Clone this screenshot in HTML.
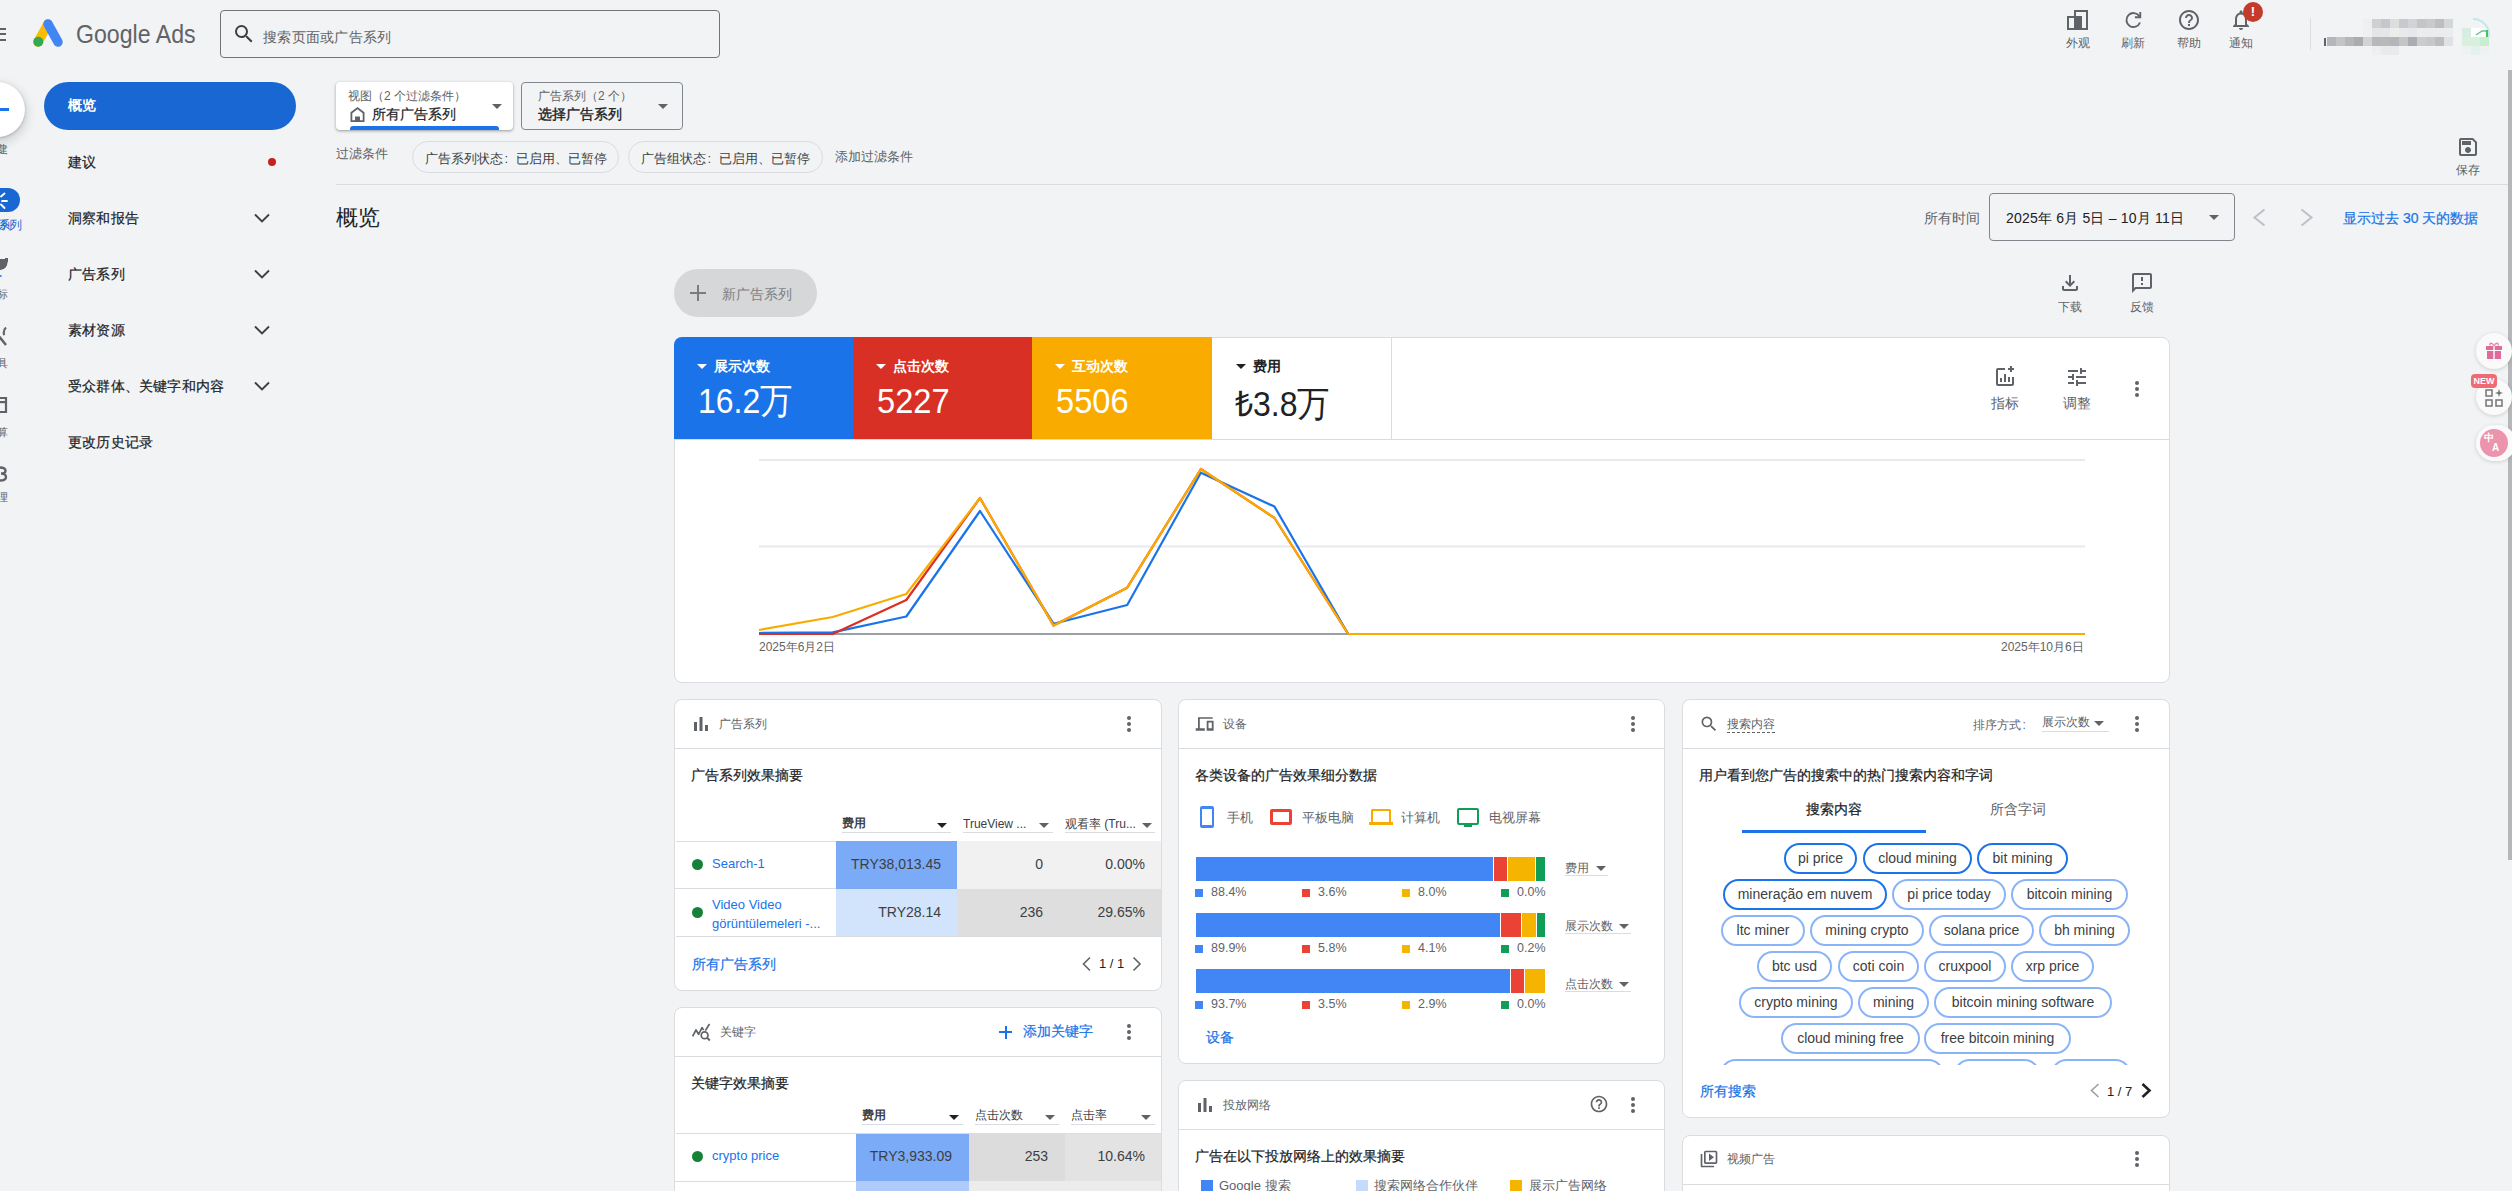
<!DOCTYPE html>
<html><head><meta charset="utf-8">
<style>
*{box-sizing:border-box;margin:0;padding:0}
html,body{width:2512px;height:1191px;overflow:hidden}
body{background:#f1f3f4;font-family:"Liberation Sans",sans-serif;color:#202124;position:relative}
.a{position:absolute;white-space:nowrap}
.g{color:#5f6368}
.card{position:absolute;background:#fff;border:1px solid #dadce0;border-radius:8px;overflow:hidden}
.hdr{position:absolute;left:0;right:0;top:0;height:50px;border-bottom:1px solid #dadce0}
svg{display:block}
.m{-webkit-text-stroke:0.2px currentColor}
.dots{position:absolute;width:4px}
.dots i{display:block;width:4px;height:4px;border-radius:2px;background:#5f6368;margin-bottom:2px}
</style></head><body>

<!-- ===== TOP BAR ===== -->
<div class="a" style="left:0;top:28px;width:6px;height:2px;background:#5f6368"></div>
<div class="a" style="left:0;top:33px;width:6px;height:2px;background:#5f6368"></div>
<div class="a" style="left:0;top:39px;width:6px;height:2px;background:#5f6368"></div>

<svg class="a" style="left:30px;top:16px" width="36" height="34" viewBox="0 0 36 34">
  <line x1="18" y1="8" x2="8" y2="26" stroke="#fbbc04" stroke-width="9.5" stroke-linecap="round"/>
  <line x1="18" y1="8" x2="28" y2="26" stroke="#4285f4" stroke-width="9.5" stroke-linecap="round"/>
  <circle cx="8.3" cy="25.7" r="5" fill="#34a853"/>
</svg>
<div class="a" style="left:76px;top:20px;font-size:25px;color:#5f6368;transform:scaleX(0.925);transform-origin:0 0">Google Ads</div>

<div class="a" style="left:220px;top:10px;width:500px;height:48px;border:1px solid #70757a;border-radius:4px"></div>
<svg class="a" style="left:232px;top:22px" width="24" height="24" viewBox="0 0 24 24"><path fill="#3c4043" d="M15.5 14h-.79l-.28-.27A6.47 6.47 0 0 0 16 9.5 6.5 6.5 0 1 0 9.5 16c1.61 0 3.09-.59 4.23-1.57l.27.28v.79l5 4.99L20.49 19l-4.99-5zm-6 0C7.01 14 5 11.99 5 9.5S7.01 5 9.5 5 14 7.01 14 9.5 11.99 14 9.5 14z"/></svg>
<div class="a g" style="left:263px;top:29px;font-size:14px;letter-spacing:0.25px">搜索页面或广告系列</div>

<!-- top right icons -->
<svg class="a" style="left:2066px;top:9px" width="24" height="22" viewBox="2066 9 24 22"><rect x="2075" y="11" width="12" height="18" fill="none" stroke="#5f6368" stroke-width="2"/><rect x="2068" y="17" width="7" height="12" fill="none" stroke="#5f6368" stroke-width="2"/><rect x="2074" y="16" width="8" height="14" fill="#5f6368"/></svg>
<div class="a g" style="left:2066px;top:35px;font-size:12px">外观</div>
<svg class="a" style="left:2121px;top:8px" width="24" height="24" viewBox="0 0 24 24"><path fill="none" stroke="#5f6368" stroke-width="1.9" d="M18.3 8.2A7 7 0 1 0 19 14.5"/><path fill="#5f6368" d="M20.2 3.9v6.3h-6.3v-1.9h4.4V3.9z"/></svg>
<div class="a g" style="left:2121px;top:35px;font-size:12px">刷新</div>
<svg class="a" style="left:2177px;top:8px" width="24" height="24" viewBox="0 0 24 24"><path fill="#5f6368" d="M11 18h2v-2h-2v2zm1-16C6.48 2 2 6.48 2 12s4.48 10 10 10 10-4.48 10-10S17.52 2 12 2zm0 18c-4.41 0-8-3.59-8-8s3.59-8 8-8 8 3.59 8 8-3.59 8-8 8zm0-14c-2.21 0-4 1.79-4 4h2c0-1.1.9-2 2-2s2 .9 2 2c0 2-3 1.75-3 5h2c0-2.25 3-2.5 3-5 0-2.21-1.79-4-4-4z"/></svg>
<div class="a g" style="left:2177px;top:35px;font-size:12px">帮助</div>
<svg class="a" style="left:2229px;top:8px" width="24" height="24" viewBox="0 0 24 24"><path fill="#5f6368" d="M12 22c1.1 0 2-.9 2-2h-4c0 1.1.9 2 2 2zm6-6v-5c0-3.07-1.63-5.64-4.5-6.32V4c0-.83-.67-1.5-1.5-1.5s-1.5.67-1.5 1.5v.68C7.64 5.36 6 7.92 6 11v5l-2 2v1h16v-1l-2-2zm-2 1H8v-6c0-2.48 1.51-4.5 4-4.5s4 2.02 4 4.5v6z"/></svg>
<div class="a" style="left:2243px;top:2px;width:20px;height:20px;border-radius:10px;background:#c43b2c;color:#fff;font-size:13px;font-weight:bold;text-align:center;line-height:20px">!</div>
<div class="a g" style="left:2229px;top:35px;font-size:12px">通知</div>
<div class="a" style="left:2310px;top:18px;width:1px;height:32px;background:#dadce0"></div>
<!-- blurred account -->
<svg class="a" style="left:2300px;top:0" width="212" height="64" viewBox="2300 0 212 64"><rect x="2363" y="19" width="9" height="9" fill="#eef0f0"/><rect x="2363" y="28" width="9" height="9" fill="#eef0f1"/><rect x="2363" y="37" width="9" height="9" fill="#d2d4d4"/><rect x="2372" y="19" width="9" height="9" fill="#cfd0d2"/><rect x="2372" y="28" width="9" height="9" fill="#e4e5e8"/><rect x="2372" y="37" width="9" height="9" fill="#b7b8bb"/><rect x="2381" y="19" width="9" height="9" fill="#c6c7ca"/><rect x="2381" y="28" width="9" height="9" fill="#e5e6e8"/><rect x="2381" y="37" width="9" height="9" fill="#b9b9ba"/><rect x="2390" y="19" width="9" height="9" fill="#dcdedd"/><rect x="2390" y="28" width="9" height="9" fill="#eceeec"/><rect x="2390" y="37" width="9" height="9" fill="#b5b6bb"/><rect x="2399" y="19" width="9" height="9" fill="#c8c9cc"/><rect x="2399" y="28" width="9" height="9" fill="#e7eaec"/><rect x="2399" y="37" width="9" height="9" fill="#c4c5c5"/><rect x="2408" y="19" width="9" height="9" fill="#d2d3d6"/><rect x="2408" y="28" width="9" height="9" fill="#e6e7ea"/><rect x="2408" y="37" width="9" height="9" fill="#acadb2"/><rect x="2417" y="19" width="9" height="9" fill="#c4c5c8"/><rect x="2417" y="28" width="9" height="9" fill="#ebecee"/><rect x="2417" y="37" width="9" height="9" fill="#cbcccc"/><rect x="2426" y="19" width="9" height="9" fill="#c9cbca"/><rect x="2426" y="28" width="9" height="9" fill="#ebecee"/><rect x="2426" y="37" width="9" height="9" fill="#c7c8c8"/><rect x="2435" y="19" width="9" height="9" fill="#bdbec1"/><rect x="2435" y="28" width="9" height="9" fill="#ebecee"/><rect x="2435" y="37" width="9" height="9" fill="#bcbdc1"/><rect x="2444" y="19" width="9" height="9" fill="#d4d6d9"/><rect x="2444" y="28" width="9" height="9" fill="#ebecee"/><rect x="2444" y="37" width="9" height="9" fill="#e0e1e4"/><rect x="2327" y="37" width="9" height="9" fill="#b5b6b9"/><rect x="2336" y="37" width="9" height="9" fill="#c4c4c6"/><rect x="2345" y="37" width="9" height="9" fill="#b4b8bb"/><rect x="2354" y="37" width="9" height="9" fill="#abacb0"/><rect x="2372" y="46" width="9" height="9" fill="#eef0f0"/><rect x="2381" y="46" width="9" height="9" fill="#e8eaeb"/><rect x="2390" y="46" width="9" height="9" fill="#e9eaeb"/><rect x="2462" y="28" width="9" height="9" fill="#d5ede2"/><rect x="2471" y="28" width="18" height="9" fill="#ffffff"/><rect x="2462" y="37" width="18" height="9" fill="#d9f0df"/><rect x="2480" y="37" width="9" height="9" fill="#c9edd0"/><rect x="2462" y="46" width="9" height="9" fill="#eef3f2"/><rect x="2471" y="46" width="9" height="9" fill="#e2f3ee"/><rect x="2480" y="46" width="9" height="9" fill="#eef3f2"/><path d="M2473 19 a16 16 0 0 1 16 18" fill="none" stroke="#bfe8ee" stroke-width="2"/><path d="M2476 35 l6-4 l6 0" fill="none" stroke="#6cc486" stroke-width="1.5"/><rect x="2486" y="30" width="2" height="7" fill="#46c35a"/><rect x="2324" y="38" width="2" height="8" fill="#5f6368"/></svg>
<!-- ===== LEFT RAIL ===== -->
<div class="a" style="left:-30px;top:82px;width:55px;height:55px;border-radius:50%;background:#fff;box-shadow:0 1px 3px rgba(60,64,67,.3),0 4px 8px 3px rgba(60,64,67,.15)"></div>
<div class="a" style="left:0;top:108px;width:9px;height:3px;background:#1a73e8"></div>
<div class="a g" style="left:-8px;top:141px;font-size:11px">建</div>
<div class="a" style="left:-12px;top:188px;width:32px;height:24px;border-radius:12px;background:#1967d2"></div>
<div class="a" style="left:-10px;top:218px;font-size:11px;color:#1967d2">系列</div>

<!-- ===== NAV ===== -->
<div class="a" style="left:44px;top:82px;width:252px;height:48px;border-radius:24px;background:#1967d2"></div>
<div class="a" style="left:68px;top:97px;font-size:14px;font-weight:bold;color:#fff">概览</div>
<div class="a m" style="left:68px;top:154px;font-size:14px;letter-spacing:0.2px;-webkit-text-stroke:0.2px #202124">建议</div>
<div class="a" style="left:268px;top:158px;width:8px;height:8px;border-radius:4px;background:#c5221f"></div>
<div class="a m" style="left:68px;top:210px;font-size:14px;letter-spacing:0.2px;-webkit-text-stroke:0.2px #202124">洞察和报告</div>
<div class="a m" style="left:68px;top:266px;font-size:14px;letter-spacing:0.2px;-webkit-text-stroke:0.2px #202124">广告系列</div>
<div class="a m" style="left:68px;top:322px;font-size:14px;letter-spacing:0.2px;-webkit-text-stroke:0.2px #202124">素材资源</div>
<div class="a m" style="left:68px;top:378px;font-size:14px;letter-spacing:0.2px;-webkit-text-stroke:0.2px #202124">受众群体、关键字和内容</div>
<div class="a m" style="left:68px;top:434px;font-size:14px;letter-spacing:0.2px;-webkit-text-stroke:0.2px #202124">更改历史记录</div>


<!-- ===== FILTER BAR ===== -->
<div class="a" style="left:336px;top:82px;width:177px;height:48px;background:#fff;border-radius:4px;box-shadow:0 1px 2px rgba(60,64,67,.3),0 1px 3px 1px rgba(60,64,67,.15);overflow:hidden">
  <div class="a g" style="left:12px;top:6px;font-size:12px">视图（2 个过滤条件）</div>
  <svg class="a" style="left:14px;top:24px" width="16" height="17" viewBox="0 0 16 17"><path fill="#5f6368" d="M7.5 1 .5 6.3V16h14V6.3L7.5 1zm5.2 13.2H2.3V7.2l5.2-3.9 5.2 3.9z"/><path fill="#5f6368" d="M5 10.5h5v4.5H5z"/></svg>
  <div class="a m" style="left:36px;top:24px;font-size:14px;color:#202124">所有广告系列</div>
  <div class="a" style="left:156px;top:22px;width:0;height:0;border-left:5px solid transparent;border-right:5px solid transparent;border-top:5px solid #5f6368"></div>
  <div class="a" style="left:14px;top:44px;width:149px;height:6px;border-radius:3px;background:#1a73e8"></div>
</div>
<div class="a" style="left:521px;top:82px;width:162px;height:48px;border:1px solid #80868b;border-radius:4px">
  <div class="a g" style="left:16px;top:5px;font-size:12px">广告系列（2 个）</div>
  <div class="a m" style="left:16px;top:23px;font-size:14px;color:#202124;-webkit-text-stroke:0.35px #202124">选择广告系列</div>
  <div class="a" style="left:136px;top:21px;width:0;height:0;border-left:5px solid transparent;border-right:5px solid transparent;border-top:5px solid #5f6368"></div>
</div>

<div class="a g" style="left:336px;top:145px;font-size:13px">过滤条件</div>
<div class="a" style="left:412px;top:141px;width:207px;height:32px;border:1px solid #dadce0;border-radius:16px"></div>
<div class="a" style="left:425px;top:150px;font-size:13px;color:#3c4043">广告系列状态<span style="display:inline-block;width:13px;padding-left:1.5px">:</span>已启用、已暂停</div>
<div class="a" style="left:628px;top:141px;width:195px;height:32px;border:1px solid #dadce0;border-radius:16px"></div>
<div class="a" style="left:641px;top:150px;font-size:13px;color:#3c4043">广告组状态<span style="display:inline-block;width:13px;padding-left:1.5px">:</span>已启用、已暂停</div>
<div class="a g" style="left:835px;top:148px;font-size:13px">添加过滤条件</div>

<svg class="a" style="left:2456px;top:135px" width="24" height="24" viewBox="0 0 24 24"><path fill="#5f6368" d="M17 3H5a2 2 0 0 0-2 2v14a2 2 0 0 0 2 2h14c1.1 0 2-.9 2-2V7l-4-4zm2 16H5V5h11.17L19 7.83V19zm-7-7c-1.66 0-3 1.34-3 3s1.34 3 3 3 3-1.34 3-3-1.34-3-3-3zM6 6h9v4H6z"/></svg>
<div class="a g" style="left:2456px;top:162px;font-size:12px">保存</div>
<div class="a" style="left:336px;top:184px;width:2172px;height:1px;background:#dadce0"></div>

<!-- ===== TITLE / DATE ===== -->
<div class="a" style="left:336px;top:203px;font-size:22px;color:#202124">概览</div>
<div class="a g" style="left:1924px;top:210px;font-size:14px">所有时间</div>
<div class="a" style="left:1989px;top:193px;width:246px;height:48px;border:1px solid #80868b;border-radius:4px"></div>
<div class="a" style="left:2006px;top:210px;font-size:14px;color:#202124;letter-spacing:0.2px">2025年 6月 5日 – 10月 11日</div>
<div class="a" style="left:2209px;top:215px;width:0;height:0;border-left:5px solid transparent;border-right:5px solid transparent;border-top:5px solid #5f6368"></div>
<svg class="a" style="left:2250px;top:206px" width="70" height="24" viewBox="2250 206 70 24"><path d="M2264.5 209.5 2254.5 217.5l10 8" fill="none" stroke="#bdc1c6" stroke-width="2"/><path d="M2301.5 209.5l10 8-10 8" fill="none" stroke="#bdc1c6" stroke-width="2"/></svg>

<div class="a m" style="left:2343px;top:210px;font-size:14px;color:#1a73e8">显示过去 30 天的数据</div>

<!-- ===== NEW CAMPAIGN / DOWNLOAD ===== -->
<div class="a" style="left:674px;top:269px;width:143px;height:48px;border-radius:24px;background:#d6d7d9"></div>
<div class="a" style="left:690px;top:292px;width:16px;height:2px;background:#7a7c80"></div>
<div class="a" style="left:697px;top:285px;width:2px;height:16px;background:#7a7c80"></div>
<div class="a" style="left:722px;top:286px;font-size:14px;color:#7d7f83">新广告系列</div>
<svg class="a" style="left:2058px;top:271px" width="24" height="24" viewBox="0 0 24 24"><path fill="#5f6368" d="M18 15v3H6v-3H4v3c0 1.1.9 2 2 2h12c1.1 0 2-.9 2-2v-3h-2zm-1-4-1.41-1.41L13 12.17V4h-2v8.17L8.41 9.59 7 11l5 5 5-5z"/></svg>
<div class="a g" style="left:2058px;top:299px;font-size:12px">下载</div>
<svg class="a" style="left:2130px;top:271px" width="24" height="24" viewBox="0 0 24 24"><path fill="#5f6368" d="M20 2H4c-1.1 0-1.99.9-1.99 2L2 22l4-4h14c1.1 0 2-.9 2-2V4c0-1.1-.9-2-2-2zm0 14H5.17l-.59.59-.58.58V4h16v12zm-9-4h2v2h-2zm0-6h2v4h-2z"/></svg>
<div class="a g" style="left:2130px;top:299px;font-size:12px">反馈</div>


<!-- ===== CHART CARD ===== -->
<div class="card" style="left:674px;top:337px;width:1496px;height:346px"></div>
<div class="a" style="left:674px;top:337px;width:179px;height:102px;background:#1a73e8;border-top-left-radius:8px"></div>
<div class="a" style="left:853px;top:337px;width:179px;height:102px;background:#d93025"></div>
<div class="a" style="left:1032px;top:337px;width:180px;height:102px;background:#f9ab00"></div>
<div class="a" style="left:1391px;top:338px;width:1px;height:101px;background:#dadce0"></div>
<div class="a" style="left:674px;top:439px;width:1496px;height:1px;background:#dadce0"></div>

<div class="a" style="left:697px;top:364px;border-left:5px solid transparent;border-right:5px solid transparent;border-top:5px solid #fff"></div>
<div class="a" style="left:714px;top:358px;font-size:14px;font-weight:bold;color:#fff">展示次数</div>
<div class="a" style="left:698px;top:378px;font-size:35.5px;transform:scaleX(0.9);transform-origin:0 0;color:#fff">16.2万</div>
<div class="a" style="left:876px;top:364px;border-left:5px solid transparent;border-right:5px solid transparent;border-top:5px solid #fff"></div>
<div class="a" style="left:893px;top:358px;font-size:14px;font-weight:bold;color:#fff">点击次数</div>
<div class="a" style="left:877px;top:381px;font-size:35.5px;transform:scaleX(0.92);transform-origin:0 0;color:#fff">5227</div>
<div class="a" style="left:1055px;top:364px;border-left:5px solid transparent;border-right:5px solid transparent;border-top:5px solid #fff"></div>
<div class="a" style="left:1072px;top:358px;font-size:14px;font-weight:bold;color:#fff">互动次数</div>
<div class="a" style="left:1056px;top:381px;font-size:35.5px;transform:scaleX(0.92);transform-origin:0 0;color:#fff">5506</div>
<div class="a" style="left:1236px;top:364px;border-left:5px solid transparent;border-right:5px solid transparent;border-top:5px solid #202124"></div>
<div class="a" style="left:1253px;top:358px;font-size:14px;font-weight:bold;color:#202124">费用</div>
<div class="a" style="left:1235px;top:378px;font-size:35.5px;transform:scaleX(0.9);transform-origin:0 0;color:#202124">₺3.8万</div>

<svg class="a" style="left:1993px;top:365px" width="24" height="24" viewBox="0 0 24 24"><path fill="#5f6368" d="M3 5v14a2 2 0 0 0 2 2h14a2 2 0 0 0 2-2v-7h-2v7H5V5h7V3H5a2 2 0 0 0-2 2zm4 8h2v4H7zm4-4h2v8h-2zm4 3h2v5h-2zM19 3V1h-2v2h-2v2h2v2h2V5h2V3z"/></svg>
<div class="a g" style="left:1991px;top:395px;font-size:14px">指标</div>
<svg class="a" style="left:2065px;top:365px" width="24" height="24" viewBox="0 0 24 24"><path fill="#5f6368" d="M3 17v2h6v-2H3zM3 5v2h10V5H3zm10 16v-2h8v-2h-8v-2h-2v6h2zM7 9v2H3v2h4v2h2V9H7zm14 4v-2H11v2h10zm-6-4h2V7h4V5h-4V3h-2v6z"/></svg>
<div class="a g" style="left:2063px;top:395px;font-size:14px">调整</div>
<div class="dots" style="left:2135px;top:381px"><i></i><i></i><i></i></div>

<svg class="a" style="left:675px;top:338px" width="1494" height="345" viewBox="675 338 1494 345">
  <line x1="759" y1="460" x2="2085" y2="460" stroke="#e8eaed" stroke-width="2"/>
  <line x1="759" y1="546.5" x2="2085" y2="546.5" stroke="#e8eaed" stroke-width="2"/>
  <line x1="759" y1="634" x2="2085" y2="634" stroke="#9aa0a6" stroke-width="2"/>
  <polyline fill="none" stroke="#1a73e8" stroke-width="2.2" stroke-linejoin="round" points="759.0,633.0 832.7,632.3 906.3,616.5 980.0,511.0 1053.6,623.7 1127.2,605.0 1200.9,472.7 1274.5,506.6 1348.2,634.0 2085,634"/>
  <polyline fill="none" stroke="#d93025" stroke-width="2.2" stroke-linejoin="round" points="759.0,634.0 832.7,634.0 906.3,600.0 980.0,498.0 1053.6,625.6 1127.2,587.7 1200.9,469.0 1274.5,518.0 1348.2,634.0 2085,634"/>
  <polyline fill="none" stroke="#f9ab00" stroke-width="2.2" stroke-linejoin="round" points="759.0,630.0 832.7,617.0 906.3,594.0 980.0,498.0 1053.6,625.6 1127.2,587.7 1200.9,469.0 1274.5,518.0 1348.2,634.0 2085,634"/>
</svg>
<div class="a g" style="left:759px;top:639px;font-size:12px">2025年6月2日</div>
<div class="a g" style="left:2001px;top:639px;font-size:12px">2025年10月6日</div>

<!-- ===== CARD CAMPAIGNS ===== -->
<div class="card" style="left:674px;top:699px;width:488px;height:292px"></div>
<div class="a" style="left:674px;top:748px;width:488px;height:1px;background:#dadce0"></div>
<svg class="a" style="left:692px;top:715px" width="18" height="18" viewBox="0 0 18 18"><path fill="#5f6368" d="M2 7h3v9H2zM7.5 2h3v14h-3zM13 10h3v6h-3z"/></svg>
<div class="a g" style="left:719px;top:716px;font-size:12px">广告系列</div>
<div class="dots" style="left:1127px;top:716px"><i></i><i></i><i></i></div>
<div class="a m" style="left:691px;top:767px;font-size:14px;color:#202124">广告系列效果摘要</div>
<div class="a" style="left:842px;top:815px;font-size:12px;font-weight:bold;color:#3c4043">费用</div><div class="a" style="left:937px;top:823px;border-left:5px solid transparent;border-right:5px solid transparent;border-top:5px solid #202124"></div>
<div class="a" style="left:842px;top:832px;width:109px;height:1px;background:#dadce0"></div>
<div class="a" style="left:963px;top:817px;font-size:12px;color:#3c4043">TrueView ...</div><div class="a" style="left:1039px;top:823px;border-left:5px solid transparent;border-right:5px solid transparent;border-top:5px solid #5f6368"></div>
<div class="a" style="left:963px;top:832px;width:90px;height:1px;background:#dadce0"></div>
<div class="a" style="left:1065px;top:816px;font-size:12px;color:#3c4043">观看率 (Tru...</div><div class="a" style="left:1142px;top:823px;border-left:5px solid transparent;border-right:5px solid transparent;border-top:5px solid #5f6368"></div>
<div class="a" style="left:1065px;top:832px;width:90px;height:1px;background:#dadce0"></div>
<div class="a" style="left:676px;top:841px;width:485px;height:1px;background:#dadce0"></div>
<div class="a" style="left:836px;top:841px;width:121px;height:48px;background:#7baaf7"></div>
<div class="a" style="left:957px;top:841px;width:204px;height:48px;background:#f1f1f1"></div>
<div class="a" style="left:675px;top:888px;width:161px;height:1px;background:#dadce0"></div>
<div class="a" style="left:836px;top:889px;width:121px;height:48px;background:#d2e3fc"></div>
<div class="a" style="left:957px;top:889px;width:204px;height:48px;background:#dedede"></div>
<div class="a" style="left:676px;top:936px;width:485px;height:1px;background:#dadce0"></div>
<div class="a" style="left:692px;top:859px;width:11px;height:11px;border-radius:6px;background:#188038"></div>
<div class="a" style="left:712px;top:856px;font-size:13px;color:#1a73e8">Search-1</div>
<div class="a" style="left:692px;top:907px;width:11px;height:11px;border-radius:6px;background:#188038"></div>
<div class="a" style="left:712px;top:895px;font-size:13px;color:#1a73e8;line-height:19px">Video Video<br>görüntülemeleri -...</div>
<div class="a" style="right:1571px;top:856px;font-size:14px;color:#3c4043">TRY38,013.45</div>
<div class="a" style="right:1469px;top:856px;font-size:14px;color:#3c4043">0</div>
<div class="a" style="right:1367px;top:856px;font-size:14px;color:#3c4043">0.00%</div>
<div class="a" style="right:1571px;top:904px;font-size:14px;color:#3c4043">TRY28.14</div>
<div class="a" style="right:1469px;top:904px;font-size:14px;color:#3c4043">236</div>
<div class="a" style="right:1367px;top:904px;font-size:14px;color:#3c4043">29.65%</div>
<div class="a" style="left:692px;top:956px;font-size:14px;color:#1a73e8;-webkit-text-stroke:0.2px #1a73e8">所有广告系列</div>
<svg class="a" style="left:1080px;top:956px" width="14" height="16" viewBox="0 0 14 16"><path d="M10 1.5 3.5 8l6.5 6.5" fill="none" stroke="#5f6368" stroke-width="1.6"/></svg>
<div class="a" style="left:1099px;top:956px;font-size:13px;color:#202124">1 / 1</div>
<svg class="a" style="left:1130px;top:956px" width="14" height="16" viewBox="0 0 14 16"><path d="M3.5 1.5 10 8l-6.5 6.5" fill="none" stroke="#5f6368" stroke-width="1.6"/></svg>
<!-- ===== CARD KEYWORDS ===== -->
<div class="card" style="left:674px;top:1007px;width:488px;height:300px"></div>
<div class="a" style="left:674px;top:1056px;width:488px;height:1px;background:#dadce0"></div>
<svg class="a" style="left:688px;top:1018px" width="26" height="28" viewBox="688 1018 26 28"><path fill="none" stroke="#5f6368" stroke-width="1.7" stroke-linejoin="round" d="M692.6 1036.3 696 1030l2.6 4.3 3.4-6.7 1.6 2.4M705.3 1030.6l4.2-6.6"/><circle cx="704.6" cy="1035.2" r="3.4" fill="none" stroke="#5f6368" stroke-width="1.7"/><path stroke="#5f6368" stroke-width="1.9" d="m707 1037.6 2.8 2.9"/></svg>
<div class="a g" style="left:720px;top:1024px;font-size:12px">关键字</div>
<div class="a" style="left:999px;top:1031px;width:13px;height:2px;background:#1a73e8"></div><div class="a" style="left:1004.5px;top:1025.5px;width:2px;height:13px;background:#1a73e8"></div>
<div class="a" style="left:1023px;top:1023px;font-size:14px;color:#1a73e8;-webkit-text-stroke:0.2px #1a73e8">添加关键字</div>
<div class="dots" style="left:1127px;top:1024px"><i></i><i></i><i></i></div>
<div class="a m" style="left:691px;top:1075px;font-size:14px;color:#202124">关键字效果摘要</div>
<div class="a" style="left:862px;top:1107px;font-size:12px;font-weight:bold;color:#3c4043">费用</div><div class="a" style="left:949px;top:1115px;border-left:5px solid transparent;border-right:5px solid transparent;border-top:5px solid #202124"></div>
<div class="a" style="left:862px;top:1124px;width:101px;height:1px;background:#dadce0"></div>
<div class="a" style="left:975px;top:1107px;font-size:12px;color:#3c4043">点击次数</div><div class="a" style="left:1045px;top:1115px;border-left:5px solid transparent;border-right:5px solid transparent;border-top:5px solid #5f6368"></div>
<div class="a" style="left:975px;top:1124px;width:84px;height:1px;background:#dadce0"></div>
<div class="a" style="left:1071px;top:1107px;font-size:12px;color:#3c4043">点击率</div><div class="a" style="left:1141px;top:1115px;border-left:5px solid transparent;border-right:5px solid transparent;border-top:5px solid #5f6368"></div>
<div class="a" style="left:1071px;top:1124px;width:84px;height:1px;background:#dadce0"></div>
<div class="a" style="left:676px;top:1133px;width:485px;height:1px;background:#dadce0"></div>
<div class="a" style="left:856px;top:1134px;width:113px;height:47px;background:#7baaf7"></div>
<div class="a" style="left:969px;top:1134px;width:96px;height:47px;background:#dcdcdc"></div>
<div class="a" style="left:1065px;top:1134px;width:96px;height:47px;background:#e3e3e3"></div>
<div class="a" style="left:675px;top:1181px;width:181px;height:1px;background:#dadce0"></div>
<div class="a" style="left:856px;top:1181px;width:113px;height:20px;background:#aecbfa"></div>
<div class="a" style="left:969px;top:1181px;width:192px;height:20px;background:#ececec"></div>
<div class="a" style="left:692px;top:1151px;width:11px;height:11px;border-radius:6px;background:#188038"></div>
<div class="a" style="left:712px;top:1148px;font-size:13px;color:#1a73e8">crypto price</div>
<div class="a" style="right:1560px;top:1148px;font-size:14px;color:#3c4043">TRY3,933.09</div>
<div class="a" style="right:1464px;top:1148px;font-size:14px;color:#3c4043">253</div>
<div class="a" style="right:1367px;top:1148px;font-size:14px;color:#3c4043">10.64%</div>
<!-- ===== CARD DEVICES ===== -->
<div class="card" style="left:1178px;top:699px;width:487px;height:365px"></div>
<div class="a" style="left:1178px;top:748px;width:487px;height:1px;background:#dadce0"></div>
<svg class="a" style="left:1190px;top:710px" width="30" height="28" viewBox="1190 710 30 28"><path fill="#5f6368" d="M1198 717.2h14.7v1.6H1199.8v9.4h5v2.5h-9.1v-2.5h2.3z"/><path fill="#5f6368" d="M1206.7 720.7h6.9v10h-6.9zm1.8 1.8v5.7h3.3v-5.7z"/></svg>
<div class="a g" style="left:1223px;top:716px;font-size:12px">设备</div>
<div class="dots" style="left:1631px;top:716px"><i></i><i></i><i></i></div>
<div class="a m" style="left:1195px;top:767px;font-size:14px;color:#202124">各类设备的广告效果细分数据</div>
<div class="a" style="left:1200px;top:806px;width:14px;height:22px;border:2.5px solid #4285f4;border-top-width:3.5px;border-bottom-width:3.5px;border-radius:2px"></div>
<div class="a g" style="left:1227px;top:809px;font-size:13px">手机</div>
<div class="a" style="left:1270px;top:809px;width:22px;height:16px;border:3px solid #ea4335;border-radius:2px"></div>
<div class="a g" style="left:1302px;top:809px;font-size:13px">平板电脑</div>
<div class="a" style="left:1371px;top:809px;width:20px;height:14px;border:2.2px solid #f9ab00;border-bottom:0;border-radius:2px 2px 0 0"></div><div class="a" style="left:1369px;top:822px;width:24px;height:3px;background:#f9ab00"></div>
<div class="a g" style="left:1401px;top:809px;font-size:13px">计算机</div>
<div class="a" style="left:1457px;top:808px;width:22px;height:17px;border:2.2px solid #0f9d58;border-radius:2px"></div><div class="a" style="left:1464px;top:825px;width:8px;height:2px;background:#0f9d58"></div>
<div class="a g" style="left:1489px;top:809px;font-size:13px">电视屏幕</div>
<div class="a" style="left:1196px;top:857px;width:297px;height:24px;background:#4285f4"></div>
<div class="a" style="left:1494px;top:857px;width:13px;height:24px;background:#ea4335"></div>
<div class="a" style="left:1508px;top:857px;width:27px;height:24px;background:#f4b400"></div>
<div class="a" style="left:1536px;top:857px;width:9px;height:24px;background:#0f9d58"></div>
<div class="a" style="left:1195px;top:889px;width:8px;height:8px;background:#4285f4"></div>
<div class="a g" style="left:1211px;top:885px;font-size:12.5px">88.4%</div>
<div class="a" style="left:1302px;top:889px;width:8px;height:8px;background:#ea4335"></div>
<div class="a g" style="left:1318px;top:885px;font-size:12.5px">3.6%</div>
<div class="a" style="left:1402px;top:889px;width:8px;height:8px;background:#f4b400"></div>
<div class="a g" style="left:1418px;top:885px;font-size:12.5px">8.0%</div>
<div class="a" style="left:1501px;top:889px;width:8px;height:8px;background:#0f9d58"></div>
<div class="a g" style="left:1517px;top:885px;font-size:12.5px">0.0%</div>
<div class="a g" style="left:1565px;top:860px;font-size:12px">费用</div>
<div class="a" style="left:1596px;top:866px;border-left:5px solid transparent;border-right:5px solid transparent;border-top:5px solid #5f6368"></div>
<div class="a" style="left:1565px;top:875px;width:43px;height:1px;background:#dadce0"></div>
<div class="a" style="left:1196px;top:913px;width:304px;height:24px;background:#4285f4"></div>
<div class="a" style="left:1501px;top:913px;width:20px;height:24px;background:#ea4335"></div>
<div class="a" style="left:1522px;top:913px;width:14px;height:24px;background:#f4b400"></div>
<div class="a" style="left:1537px;top:913px;width:8px;height:24px;background:#0f9d58"></div>
<div class="a" style="left:1195px;top:945px;width:8px;height:8px;background:#4285f4"></div>
<div class="a g" style="left:1211px;top:941px;font-size:12.5px">89.9%</div>
<div class="a" style="left:1302px;top:945px;width:8px;height:8px;background:#ea4335"></div>
<div class="a g" style="left:1318px;top:941px;font-size:12.5px">5.8%</div>
<div class="a" style="left:1402px;top:945px;width:8px;height:8px;background:#f4b400"></div>
<div class="a g" style="left:1418px;top:941px;font-size:12.5px">4.1%</div>
<div class="a" style="left:1501px;top:945px;width:8px;height:8px;background:#0f9d58"></div>
<div class="a g" style="left:1517px;top:941px;font-size:12.5px">0.2%</div>
<div class="a g" style="left:1565px;top:918px;font-size:12px">展示次数</div>
<div class="a" style="left:1619px;top:924px;border-left:5px solid transparent;border-right:5px solid transparent;border-top:5px solid #5f6368"></div>
<div class="a" style="left:1565px;top:933px;width:66px;height:1px;background:#dadce0"></div>
<div class="a" style="left:1196px;top:969px;width:314px;height:24px;background:#4285f4"></div>
<div class="a" style="left:1511px;top:969px;width:13px;height:24px;background:#ea4335"></div>
<div class="a" style="left:1525px;top:969px;width:20px;height:24px;background:#f4b400"></div>
<div class="a" style="left:1195px;top:1001px;width:8px;height:8px;background:#4285f4"></div>
<div class="a g" style="left:1211px;top:997px;font-size:12.5px">93.7%</div>
<div class="a" style="left:1302px;top:1001px;width:8px;height:8px;background:#ea4335"></div>
<div class="a g" style="left:1318px;top:997px;font-size:12.5px">3.5%</div>
<div class="a" style="left:1402px;top:1001px;width:8px;height:8px;background:#f4b400"></div>
<div class="a g" style="left:1418px;top:997px;font-size:12.5px">2.9%</div>
<div class="a" style="left:1501px;top:1001px;width:8px;height:8px;background:#0f9d58"></div>
<div class="a g" style="left:1517px;top:997px;font-size:12.5px">0.0%</div>
<div class="a g" style="left:1565px;top:976px;font-size:12px">点击次数</div>
<div class="a" style="left:1619px;top:982px;border-left:5px solid transparent;border-right:5px solid transparent;border-top:5px solid #5f6368"></div>
<div class="a" style="left:1565px;top:991px;width:66px;height:1px;background:#dadce0"></div>
<div class="a m" style="left:1206px;top:1029px;font-size:14px;color:#1a73e8">设备</div>
<!-- ===== CARD NETWORK ===== -->
<div class="card" style="left:1178px;top:1080px;width:487px;height:200px"></div>
<div class="a" style="left:1178px;top:1129px;width:487px;height:1px;background:#dadce0"></div>
<svg class="a" style="left:1196px;top:1096px" width="18" height="18" viewBox="0 0 18 18"><path fill="#5f6368" d="M2 7h3v9H2zM7.5 2h3v14h-3zM13 10h3v6h-3z"/></svg>
<div class="a g" style="left:1223px;top:1097px;font-size:12px">投放网络</div>
<svg class="a" style="left:1589px;top:1094px" width="20" height="20" viewBox="0 0 24 24"><path fill="#5f6368" d="M11 18h2v-2h-2v2zm1-16C6.48 2 2 6.48 2 12s4.48 10 10 10 10-4.48 10-10S17.52 2 12 2zm0 18c-4.41 0-8-3.59-8-8s3.59-8 8-8 8 3.59 8 8-3.59 8-8 8zm0-14c-2.21 0-4 1.79-4 4h2c0-1.1.9-2 2-2s2 .9 2 2c0 2-3 1.75-3 5h2c0-2.25 3-2.5 3-5 0-2.21-1.79-4-4-4z"/></svg>
<div class="dots" style="left:1631px;top:1097px"><i></i><i></i><i></i></div>
<div class="a m" style="left:1195px;top:1148px;font-size:14px;color:#202124">广告在以下投放网络上的效果摘要</div>
<div class="a" style="left:1201px;top:1180px;width:12px;height:12px;background:#4285f4"></div><div class="a g" style="left:1219px;top:1177px;font-size:13px">Google 搜索</div>
<div class="a" style="left:1356px;top:1180px;width:12px;height:12px;background:#c6dafc"></div><div class="a g" style="left:1374px;top:1177px;font-size:13px">搜索网络合作伙伴</div>
<div class="a" style="left:1510px;top:1180px;width:12px;height:12px;background:#f4b400"></div><div class="a g" style="left:1529px;top:1177px;font-size:13px">展示广告网络</div>
<!-- ===== CARD SEARCH TERMS ===== -->
<div class="card" style="left:1682px;top:699px;width:488px;height:419px"></div>
<div class="a" style="left:1682px;top:748px;width:488px;height:1px;background:#dadce0"></div>
<svg class="a" style="left:1699px;top:714px" width="20" height="20" viewBox="0 0 24 24"><path fill="#5f6368" d="M15.5 14h-.79l-.28-.27A6.47 6.47 0 0 0 16 9.5 6.5 6.5 0 1 0 9.5 16c1.61 0 3.09-.59 4.23-1.57l.27.28v.79l5 4.99L20.49 19l-4.99-5zm-6 0C7.01 14 5 11.99 5 9.5S7.01 5 9.5 5 14 7.01 14 9.5 11.99 14 9.5 14z"/></svg>
<div class="a g" style="left:1727px;top:716.5px;font-size:12px;border-bottom:1px dashed #5f6368;line-height:15px">搜索内容</div>
<div class="a g" style="left:1973px;top:717px;font-size:12px">排序方式<span style="display:inline-block;width:12px;padding-left:1.5px">:</span></div>
<div class="a g" style="left:2042px;top:714px;font-size:12px">展示次数</div><div class="a" style="left:2094px;top:721px;border-left:5px solid transparent;border-right:5px solid transparent;border-top:5px solid #5f6368"></div>
<div class="a" style="left:2042px;top:731px;width:67px;height:1px;background:#dadce0"></div>
<div class="dots" style="left:2135px;top:716px"><i></i><i></i><i></i></div>
<div class="a m" style="left:1699px;top:767px;font-size:14px;color:#202124">用户看到您广告的搜索中的热门搜索内容和字词</div>
<div class="a m" style="left:1806px;top:801px;font-size:14px;color:#202124">搜索内容</div>
<div class="a g" style="left:1990px;top:801px;font-size:14px">所含字词</div>
<div class="a" style="left:1742px;top:830px;width:184px;height:3px;background:#1a73e8"></div>
<div class="a" style="left:1784px;top:843px;width:73px;height:31px;border:2px solid #1a73e8;border-radius:16px;font-size:14px;color:#3c4043;text-align:center;line-height:27px">pi price</div>
<div class="a" style="left:1863px;top:843px;width:109px;height:31px;border:2px solid #1a73e8;border-radius:16px;font-size:14px;color:#3c4043;text-align:center;line-height:27px">cloud mining</div>
<div class="a" style="left:1977px;top:843px;width:91px;height:31px;border:2px solid #1a73e8;border-radius:16px;font-size:14px;color:#3c4043;text-align:center;line-height:27px">bit mining</div>
<div class="a" style="left:1723px;top:879px;width:164px;height:31px;border:2px solid #1a73e8;border-radius:16px;font-size:14px;color:#3c4043;text-align:center;line-height:27px">mineração em nuvem</div>
<div class="a" style="left:1892px;top:879px;width:114px;height:31px;border:2px solid #8ab4f8;border-radius:16px;font-size:14px;color:#3c4043;text-align:center;line-height:27px">pi price today</div>
<div class="a" style="left:2011px;top:879px;width:117px;height:31px;border:2px solid #8ab4f8;border-radius:16px;font-size:14px;color:#3c4043;text-align:center;line-height:27px">bitcoin mining</div>
<div class="a" style="left:1721px;top:915px;width:84px;height:31px;border:2px solid #8ab4f8;border-radius:16px;font-size:14px;color:#3c4043;text-align:center;line-height:27px">ltc miner</div>
<div class="a" style="left:1810px;top:915px;width:114px;height:31px;border:2px solid #8ab4f8;border-radius:16px;font-size:14px;color:#3c4043;text-align:center;line-height:27px">mining crypto</div>
<div class="a" style="left:1929px;top:915px;width:105px;height:31px;border:2px solid #8ab4f8;border-radius:16px;font-size:14px;color:#3c4043;text-align:center;line-height:27px">solana price</div>
<div class="a" style="left:2039px;top:915px;width:91px;height:31px;border:2px solid #8ab4f8;border-radius:16px;font-size:14px;color:#3c4043;text-align:center;line-height:27px">bh mining</div>
<div class="a" style="left:1757px;top:951px;width:75px;height:31px;border:2px solid #8ab4f8;border-radius:16px;font-size:14px;color:#3c4043;text-align:center;line-height:27px">btc usd</div>
<div class="a" style="left:1838px;top:951px;width:81px;height:31px;border:2px solid #8ab4f8;border-radius:16px;font-size:14px;color:#3c4043;text-align:center;line-height:27px">coti coin</div>
<div class="a" style="left:1924px;top:951px;width:82px;height:31px;border:2px solid #8ab4f8;border-radius:16px;font-size:14px;color:#3c4043;text-align:center;line-height:27px">cruxpool</div>
<div class="a" style="left:2011px;top:951px;width:83px;height:31px;border:2px solid #8ab4f8;border-radius:16px;font-size:14px;color:#3c4043;text-align:center;line-height:27px">xrp price</div>
<div class="a" style="left:1739px;top:987px;width:114px;height:31px;border:2px solid #8ab4f8;border-radius:16px;font-size:14px;color:#3c4043;text-align:center;line-height:27px">crypto mining</div>
<div class="a" style="left:1858px;top:987px;width:71px;height:31px;border:2px solid #8ab4f8;border-radius:16px;font-size:14px;color:#3c4043;text-align:center;line-height:27px">mining</div>
<div class="a" style="left:1934px;top:987px;width:178px;height:31px;border:2px solid #8ab4f8;border-radius:16px;font-size:14px;color:#3c4043;text-align:center;line-height:27px">bitcoin mining software</div>
<div class="a" style="left:1781px;top:1023px;width:139px;height:31px;border:2px solid #8ab4f8;border-radius:16px;font-size:14px;color:#3c4043;text-align:center;line-height:27px">cloud mining free</div>
<div class="a" style="left:1924px;top:1023px;width:147px;height:31px;border:2px solid #8ab4f8;border-radius:16px;font-size:14px;color:#3c4043;text-align:center;line-height:27px">free bitcoin mining</div>
<div class="a" style="left:1682px;top:1059px;width:487px;height:6px;overflow:hidden">
<div class="a" style="left:38px;top:0;width:224px;height:31px;border:2px solid #8ab4f8;border-radius:16px"></div>
<div class="a" style="left:272px;top:0;width:86px;height:31px;border:2px solid #8ab4f8;border-radius:16px"></div>
<div class="a" style="left:369px;top:0;width:80px;height:31px;border:2px solid #8ab4f8;border-radius:16px"></div>
</div>
<div class="a m" style="left:1700px;top:1083px;font-size:14px;color:#1a73e8">所有搜索</div>
<svg class="a" style="left:2088px;top:1082px" width="14" height="17" viewBox="0 0 14 17"><path d="M10.5 2 3.5 8.5l7 6.5" fill="none" stroke="#9aa0a6" stroke-width="1.6"/></svg>
<div class="a" style="left:2107px;top:1084px;font-size:13px;color:#202124">1 / 7</div>
<svg class="a" style="left:2139px;top:1082px" width="14" height="17" viewBox="0 0 14 17"><path d="M3.5 2l7 6.5-7 6.5" fill="none" stroke="#202124" stroke-width="2.6"/></svg>
<!-- ===== CARD VIDEO ===== -->
<div class="card" style="left:1682px;top:1135px;width:488px;height:200px"></div>
<div class="a" style="left:1682px;top:1184px;width:488px;height:1px;background:#dadce0"></div>
<svg class="a" style="left:1699px;top:1149px" width="20" height="20" viewBox="0 0 24 24"><path fill="#5f6368" d="M4 6H2v14c0 1.1.9 2 2 2h14v-2H4V6zm16-4H8c-1.1 0-2 .9-2 2v12c0 1.1.9 2 2 2h12c1.1 0 2-.9 2-2V4c0-1.1-.9-2-2-2zm0 14H8V4h12v12zM12 5.5v9l6-4.5z"/></svg>
<div class="a g" style="left:1727px;top:1151px;font-size:12px">视频广告</div>
<div class="dots" style="left:2135px;top:1151px"><i></i><i></i><i></i></div>
<!-- nav chevrons -->
<svg class="a" style="left:253px;top:212px" width="18" height="12" viewBox="0 0 18 12"><path d="M2 2.5l7 7 7-7" fill="none" stroke="#3c4043" stroke-width="1.9"/></svg>
<svg class="a" style="left:253px;top:268px" width="18" height="12" viewBox="0 0 18 12"><path d="M2 2.5l7 7 7-7" fill="none" stroke="#3c4043" stroke-width="1.9"/></svg>
<svg class="a" style="left:253px;top:324px" width="18" height="12" viewBox="0 0 18 12"><path d="M2 2.5l7 7 7-7" fill="none" stroke="#3c4043" stroke-width="1.9"/></svg>
<svg class="a" style="left:253px;top:380px" width="18" height="12" viewBox="0 0 18 12"><path d="M2 2.5l7 7 7-7" fill="none" stroke="#3c4043" stroke-width="1.9"/></svg>
<!-- rail icons -->
<svg class="a" style="left:0;top:255px" width="12" height="26" viewBox="0 0 12 26"><path fill="#5f6368" d="M0 4h5v-1h3v4h-1.3v2.2c0 3-2.6 5.3-6.7 5.8V4zm6.2 3.2"/><path fill="none" stroke="#5f6368" stroke-width="2" d="M0 5.5h6.5v2.3c0 3.5-3 5.5-6.5 5.5"/><rect x="0" y="20" width="1.5" height="2" fill="#4285f4"/></svg>
<svg class="a" style="left:0;top:325px" width="12" height="24" viewBox="0 0 12 24"><path fill="none" stroke="#5f6368" stroke-width="2.4" d="M-2 10 6 20"/><path fill="none" stroke="#5f6368" stroke-width="2.2" d="M6 2.5c-1.2 1-2.3 3.5-2.3 5.3 0 1 .3 1.7.8 2.2"/></svg>
<svg class="a" style="left:0;top:395px" width="12" height="20" viewBox="0 0 12 20"><path fill="none" stroke="#5f6368" stroke-width="2.2" d="M-3 3h9v14h-9"/><path fill="#5f6368" d="M0 6h7v2.2H0z"/></svg>
<svg class="a" style="left:0;top:464px" width="12" height="20" viewBox="0 0 12 20"><path fill="none" stroke="#5f6368" stroke-width="2.4" d="M0 3.5c4 0 5.5 1.5 5.5 3.3S3.5 9.5 1 9.5c3 0 5 1.2 5 3.5S4 16.5 0 16.5"/></svg>
<div class="a g" style="left:-14px;top:142px;font-size:11px">创建</div>
<div class="a" style="left:-26px;top:218px;font-size:11.5px;color:#1967d2">广告系列</div>
<div class="a g" style="left:-14px;top:287px;font-size:11px">目标</div>
<div class="a g" style="left:-14px;top:356px;font-size:11px">工具</div>
<div class="a g" style="left:-14px;top:425px;font-size:11px">结算</div>
<div class="a g" style="left:-14px;top:490px;font-size:11px">管理</div>
<svg class="a" style="left:0;top:190px" width="10" height="22" viewBox="0 0 10 22"><path fill="none" stroke="#fff" stroke-width="1.8" stroke-linecap="round" d="M1 6.5 4.5 3.5M2 11h5M1 14.5l3.5 3.5"/></svg>

<!-- scrollbar + floating buttons -->
<div class="a" style="left:2508px;top:70px;width:4px;height:790px;background:#b6b7b9"></div>
<div class="a" style="left:2476px;top:333px;width:36px;height:36px;border-radius:18px;background:#fafafa;box-shadow:0 1px 4px rgba(0,0,0,.15)"></div>
<svg class="a" style="left:2485px;top:341px" width="18" height="19" viewBox="0 0 18 19"><path fill="#e06b9a" d="M1 5h16v4H1zM2 10h14v8H2z"/><path fill="#fff" d="M8.3 5h1.4v13H8.3z"/><path fill="none" stroke="#e88aae" stroke-width="1.4" d="M9 5C7 1 4 2 5 4.5M9 5c2-4 5-3 4-0.5"/></svg>
<div class="a" style="left:2476px;top:379px;width:36px;height:36px;border-radius:18px;background:#fafafa;box-shadow:0 1px 4px rgba(0,0,0,.15)"></div>
<svg class="a" style="left:2485px;top:389px" width="18" height="18" viewBox="0 0 18 18"><path fill="none" stroke="#757575" stroke-width="1.5" d="M1 1h6v6H1zM1 11h6v6H1zM11 11h6v6h-6z"/><path fill="#757575" d="M14 0l1 3 3 1-3 1-1 3-1-3-3-1 3-1z"/></svg>
<div class="a" style="left:2471px;top:374px;width:26px;height:14px;border-radius:4px;background:#ef6b73;color:#fff;font-size:9px;font-weight:bold;text-align:center;line-height:14px">NEW</div>
<div class="a" style="left:2476px;top:425px;width:40px;height:36px;border-radius:18px;background:#fafafa;box-shadow:0 1px 4px rgba(0,0,0,.15)"></div>
<div class="a" style="left:2480px;top:429px;width:28px;height:28px;border-radius:14px;background:#ec94ad"></div>
<div class="a" style="left:2484px;top:433px;font-size:10px;color:#fff;font-weight:bold;line-height:10px">中<br><span style="margin-left:8px">A</span></div>
</body></html>
